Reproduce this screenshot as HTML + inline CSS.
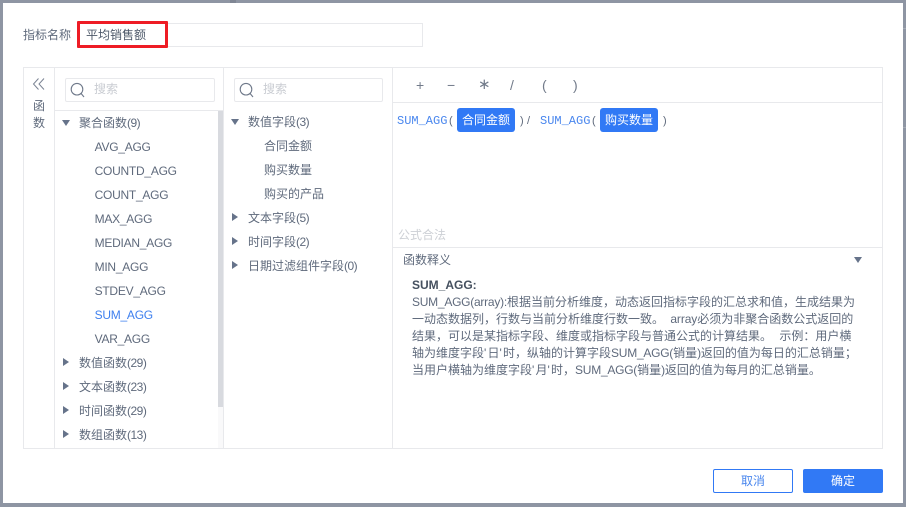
<!DOCTYPE html>
<html><head><meta charset="utf-8">
<style>
html,body{margin:0;padding:0;width:906px;height:507px;overflow:hidden;background:#8e95a3}
body{position:relative;font-family:"Liberation Sans","Noto Sans CJK SC",sans-serif;font-size:12px;color:#5f6a7c}
div,span{position:absolute;white-space:nowrap;box-sizing:border-box}
em{font-style:normal;letter-spacing:-.25px}
em.p{letter-spacing:-.5px}
em.q{letter-spacing:1.2px}
em.a{margin-left:3px;letter-spacing:-.1px}
.t{height:16px;line-height:16px}
.l{letter-spacing:-.25px}
.line{background:#e8e9ec}
.box{border:1px solid #e8e9ec;border-radius:2px}
.ph{color:#c9ccd2}
.tri-r{width:0;height:0;border-left:6px solid #66738a;border-top:4.5px solid transparent;border-bottom:4.5px solid transparent}
.tri-d{width:0;height:0;border-top:6px solid #66738a;border-left:4.5px solid transparent;border-right:4.5px solid transparent}
.mono{font-family:"Liberation Mono",monospace;font-size:12px;color:#4a87ee}
.pill{background:#3179f5;color:#fff;height:24px;line-height:24px;width:58px;text-align:center;border-radius:3px;top:108px}
.op{top:77px;font-size:14px;color:#727b8a;height:16px;line-height:16px}
.d{left:412px;height:17px;line-height:17px;color:#5f6a7c}
</style></head><body>
<div style="left:230px;top:0;width:6px;height:3px;background:#7f8694"></div>
<div style="left:903px;top:28px;width:3px;height:1px;background:#a3a9b4"></div>
<div style="left:903px;top:127px;width:3px;height:1px;background:#a3a9b4"></div>
<div style="left:3px;top:3px;width:900px;height:500px;background:#fff"></div>

<div class="t" style="left:23px;top:27px">指标名称</div>
<div class="box" style="left:78px;top:23px;width:345px;height:24px;border-radius:0"></div>
<div style="left:77px;top:21px;width:91px;height:27px;border:3px solid #ee1c25;border-radius:1px"></div>
<div class="t" style="left:86px;top:27px;color:#4d5869">平均销售额</div>

<div class="box" style="left:23px;top:67px;width:860px;height:382px;border-radius:0;border-width:1px"></div>
<div class="line" style="left:54px;top:68px;width:1px;height:381px"></div>
<div class="line" style="left:223px;top:68px;width:1px;height:381px"></div>
<div class="line" style="left:392px;top:68px;width:1px;height:381px"></div>
<div class="line" style="left:393px;top:102px;width:490px;height:1px"></div>
<div class="line" style="left:393px;top:247px;width:490px;height:1px"></div>
<div class="line" style="left:55px;top:110px;width:168px;height:1px"></div>

<svg style="position:absolute;left:32px;top:77px" width="14" height="14" viewBox="0 0 14 14" fill="none" stroke="#7b8494" stroke-width="1"><path d="M6.5 1.5L1.5 7L6.5 12.5M12 1.5L7 7L12 12.5"/></svg>
<div class="t" style="left:33px;top:98px">函</div>
<div class="t" style="left:33px;top:115px">数</div>

<div class="box" style="left:65px;top:78px;width:150px;height:24px"></div>
<svg style="position:absolute;left:70px;top:82px" width="16" height="16" viewBox="0 0 16 16" fill="none" stroke="#6f798a" stroke-width="1.1"><circle cx="7" cy="7.2" r="5.8"/><path d="M11 11.4L14 15"/></svg>
<div class="t ph" style="left:94px;top:81px">搜索</div>

<div class="box" style="left:234px;top:78px;width:149px;height:24px"></div>
<svg style="position:absolute;left:239px;top:82px" width="16" height="16" viewBox="0 0 16 16" fill="none" stroke="#6f798a" stroke-width="1.1"><circle cx="7" cy="7.2" r="5.8"/><path d="M11 11.4L14 15"/></svg>
<div class="t ph" style="left:263px;top:81px">搜索</div>

<div style="left:218px;top:407px;width:5px;height:41px;background:#f9f9fa"></div>
<div style="left:218px;top:111px;width:5px;height:296px;background:#d8dadf"></div>

<div class="tri-d" style="left:62px;top:120px"></div>
<div class="t" style="left:79px;top:115px">聚合函数<em class="p">(9)</em></div>
<div class="t l" style="left:94.6px;top:139px">AVG_AGG</div>
<div class="t l" style="left:94.6px;top:163px">COUNTD_AGG</div>
<div class="t l" style="left:94.6px;top:187px">COUNT_AGG</div>
<div class="t l" style="left:94.6px;top:211px">MAX_AGG</div>
<div class="t l" style="left:94.6px;top:235px">MEDIAN_AGG</div>
<div class="t l" style="left:94.6px;top:259px">MIN_AGG</div>
<div class="t l" style="left:94.6px;top:283px">STDEV_AGG</div>
<div class="t l" style="left:94.6px;top:307px;color:#3f80ef">SUM_AGG</div>
<div class="t l" style="left:94.6px;top:331px">VAR_AGG</div>
<div class="tri-r" style="left:63px;top:358px"></div>
<div class="t" style="left:79px;top:355px">数值函数<em class="p">(29)</em></div>
<div class="tri-r" style="left:63px;top:382px"></div>
<div class="t" style="left:79px;top:379px">文本函数<em class="p">(23)</em></div>
<div class="tri-r" style="left:63px;top:406px"></div>
<div class="t" style="left:79px;top:403px">时间函数<em class="p">(29)</em></div>
<div class="tri-r" style="left:63px;top:430px"></div>
<div class="t" style="left:79px;top:427px">数组函数<em class="p">(13)</em></div>

<div class="tri-d" style="left:231px;top:119px"></div>
<div class="t" style="left:248px;top:114px">数值字段<em class="p">(3)</em></div>
<div class="t" style="left:264px;top:138px">合同金额</div>
<div class="t" style="left:264px;top:162px">购买数量</div>
<div class="t" style="left:264px;top:186px">购买的产品</div>
<div class="tri-r" style="left:232px;top:213px"></div>
<div class="t" style="left:248px;top:210px">文本字段<em class="p">(5)</em></div>
<div class="tri-r" style="left:232px;top:237px"></div>
<div class="t" style="left:248px;top:234px">时间字段<em class="p">(2)</em></div>
<div class="tri-r" style="left:232px;top:261px"></div>
<div class="t" style="left:248px;top:258px">日期过滤组件字段<em class="p">(0)</em></div>

<div class="op" style="left:416px;font-weight:normal">+</div>
<div class="op" style="left:447px">−</div>
<div class="op" style="left:478px;font-size:15px">∗</div>
<div class="op" style="left:510px">/</div>
<div class="op" style="left:542px">(</div>
<div class="op" style="left:573px">)</div>

<div class="t mono" style="left:397px;top:113px">SUM_AGG</div>
<div class="t" style="left:449px;top:113px;font-size:11px">(</div>
<div class="pill" style="left:457px">合同金额</div>
<div class="t" style="left:520px;top:113px;font-size:11px">)</div>
<div class="t" style="left:527px;top:113px;font-size:11px">/</div>
<div class="t mono" style="left:540px;top:113px">SUM_AGG</div>
<div class="t" style="left:592px;top:113px;font-size:11px">(</div>
<div class="pill" style="left:600px">购买数量</div>
<div class="t" style="left:663px;top:113px;font-size:11px">)</div>

<div class="t" style="left:398px;top:227px;color:#cdd0d5">公式合法</div>
<div class="t" style="left:403px;top:252px">函数释义</div>
<div class="tri-d" style="left:854px;top:257px"></div>

<div class="d" style="top:277px;font-weight:bold;color:#45505f">SUM_AGG:</div>
<div class="d" style="top:294px"><em>SUM_AGG(array):</em>根据当前分析维度，动态返回指标字段的汇总求和值，生成结果为</div>
<div class="d" style="top:311px">一动态数据列，行数与当前分析维度行数一致。 <em class="a">array</em>必须为非聚合函数公式返回的</div>
<div class="d" style="top:328px">结果，可以是某指标字段、维度或指标字段与普通公式的计算结果。 <em class="a" style="margin-left:4px;letter-spacing:0"></em>示例：用户横</div>
<div class="d" style="top:345px">轴为维度字段<em class="q">'</em>日<em class="q">'</em>时，纵轴的计算字段<em>SUM_AGG(</em>销量<em>)</em>返回的值为每日的汇总销量；</div>
<div class="d" style="top:362px">当用户横轴为维度字段<em class="q">'</em>月<em class="q">'</em>时，<em>SUM_AGG(</em>销量<em>)</em>返回的值为每月的汇总销量。</div>

<div style="left:713px;top:469px;width:80px;height:24px;border:1px solid #3179f5;border-radius:2px;color:#4a87ee;text-align:center;line-height:22px">取消</div>
<div style="left:803px;top:469px;width:80px;height:24px;background:#3179f5;border-radius:2px;color:#fff;text-align:center;line-height:24px">确定</div>
</body></html>
